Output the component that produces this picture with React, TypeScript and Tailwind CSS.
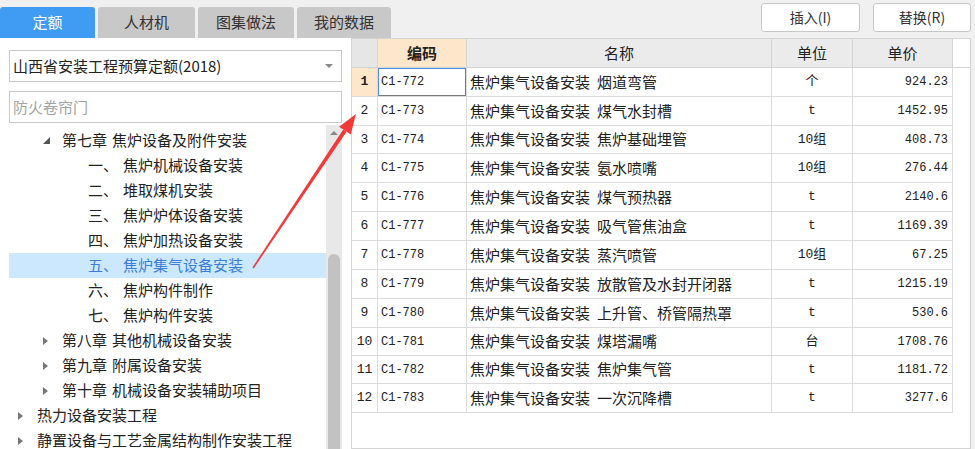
const TABS = [
  { label: '定额', active: true, w: 'w-[95px]' },
  { label: '人材机', active: false, w: 'w-[97px]' },
  { label: '图集做法', active: false, w: 'w-[96px]' },
  { label: '我的数据', active: false, w: 'w-[94px]' },
]

type TreeItem = { level: 0 | 1 | 2; text: string; open?: boolean; selected?: boolean }

const TREE: TreeItem[] = [
  { level: 1, text: '第七章 焦炉设备及附件安装', open: true },
  { level: 2, text: '一、 焦炉机械设备安装' },
  { level: 2, text: '二、 堆取煤机安装' },
  { level: 2, text: '三、 焦炉炉体设备安装' },
  { level: 2, text: '四、 焦炉加热设备安装' },
  { level: 2, text: '五、 焦炉集气设备安装', selected: true },
  { level: 2, text: '六、 焦炉构件制作' },
  { level: 2, text: '七、 焦炉构件安装' },
  { level: 1, text: '第八章 其他机械设备安装' },
  { level: 1, text: '第九章 附属设备安装' },
  { level: 1, text: '第十章 机械设备安装辅助项目' },
  { level: 0, text: '热力设备安装工程' },
  { level: 0, text: '静置设备与工艺金属结构制作安装工程' },
]

// no, code, name, unit, price, row height
const ROWS: [number, string, string, string, string, string][] = [
  [1, 'C1-772', '烟道弯管', '个', '924.23', 'h-[29px]'],
  [2, 'C1-773', '煤气水封槽', 't', '1452.95', 'h-[29px]'],
  [3, 'C1-774', '焦炉基础埋管', '10组', '408.73', 'h-[28px]'],
  [4, 'C1-775', '氨水喷嘴', '10组', '276.44', 'h-[29px]'],
  [5, 'C1-776', '煤气预热器', 't', '2140.6', 'h-[29px]'],
  [6, 'C1-777', '吸气管焦油盒', 't', '1169.39', 'h-[29px]'],
  [7, 'C1-778', '蒸汽喷管', '10组', '67.25', 'h-[29px]'],
  [8, 'C1-779', '放散管及水封开闭器', 't', '1215.19', 'h-[29px]'],
  [9, 'C1-780', '上升管、桥管隔热罩', 't', '530.6', 'h-[29px]'],
  [10, 'C1-781', '煤塔漏嘴', '台', '1708.76', 'h-[28px]'],
  [11, 'C1-782', '焦炉集气管', 't', '1181.72', 'h-[28px]'],
  [12, 'C1-783', '一次沉降槽', 't', '3277.6', 'h-[29px]'],
]

const cjk = "font-['Noto_Sans_CJK_SC',sans-serif]"
const mono = "font-['Liberation_Mono','Noto_Sans_CJK_SC',monospace]"

function TreeRow({ item }: { item: TreeItem }) {
  const pad = item.level === 0 ? 'pl-[9px]' : item.level === 1 ? 'pl-[34px]' : 'pl-[79px]'
  const [head, ...rest] = item.text.split(' ')
  return (
    <div
      className={`h-[25px] flex items-center ${pad} ${
        item.selected ? 'bg-[#cce8ff] text-[#3b7fd8]' : 'text-[#222]'
      }`}
    >
      {item.level < 2 && (
        <div className="w-[19px] shrink-0 flex items-center">
          {item.open ? (
            <svg width="7" height="7" viewBox="0 0 7 7">
              <polygon points="7,0 7,7 0,7" fill="#555" />
            </svg>
          ) : (
            <div className="w-0 h-0 border-l-[5px] border-l-[#777] border-y-[4px] border-y-transparent" />
          )}
        </div>
      )}
      <span>{head}</span>
      {rest.length > 0 && <span className="ml-[5px]">{rest.join(' ')}</span>}
    </div>
  )
}

export default function App() {
  return (
    <div className={`relative w-[975px] h-[449px] overflow-hidden bg-[#f0f0f0] flex flex-col ${cjk}`}>
      {/* Top bar: tabs + actions */}
      <div className="h-[38px] flex justify-between shrink-0">
        <div className="flex items-end gap-[3px]">
          {TABS.map((t) => (
            <div
              key={t.label}
              className={`${t.w} h-[31px] rounded-t-[3px] flex items-center justify-center text-[15px] ${
                t.active ? 'bg-[#3f9cf2] text-white' : 'bg-[#c8c8c8] text-[#333]'
              }`}
            >
              {t.label}
            </div>
          ))}
        </div>
        <div className="flex gap-[13px] pr-[4px] pt-[3px]">
          <button className="w-[99px] h-[29px] bg-white border border-[#c8c8c8] rounded-[3px] text-[14px] text-[#333]">
            插入(I)
          </button>
          <button className="w-[98px] h-[29px] bg-white border border-[#c8c8c8] rounded-[3px] text-[14px] text-[#333]">
            替换(R)
          </button>
        </div>
      </div>

      <div className="flex flex-1 min-h-0">
        {/* Left: quota tree */}
        <div className="w-[351px] bg-white flex flex-col px-[9px] shrink-0">
          <div className="mt-[12px] h-[32px] border border-[#c9c9c9] flex items-center justify-between pl-[3px] pr-[8px] text-[15px] text-[#222]">
            <span>山西省安装工程预算定额(2018)</span>
            <div className="w-0 h-0 border-t-[4px] border-t-[#888] border-x-[4px] border-x-transparent" />
          </div>
          <div className="mt-[9px] h-[32px] border border-[#c9c9c9] flex items-center pl-[3px] text-[15px] text-[#a3a3a3]">
            防火卷帘门
          </div>
          <div className="mt-[2px] flex flex-1 min-h-0">
            <div className="flex-1 pt-[3px] text-[15px]">
              {TREE.map((item) => (
                <TreeRow key={item.text} item={item} />
              ))}
            </div>
            <div className="w-[16px] bg-[#e8e8e8] flex flex-col">
              <div className="h-[16px] flex items-center justify-center">
                <div className="w-0 h-0 border-b-[4px] border-b-[#888] border-x-[4px] border-x-transparent" />
              </div>
              <div className="h-[113px]" />
              <div className="flex-1 mx-[2px] bg-[#c2c2c2] rounded-t-[6px]" />
            </div>
          </div>
        </div>

        {/* Right: quota list */}
        <div className="w-[620px] bg-white border border-[#d4d4d4] shrink-0">
          <div className="flex h-[29px] border-b border-[#d4d4d4] text-[15px] text-[#222]">
            <div className="w-[26px] bg-[#e6e6e6] border-r border-[#d4d4d4]" />
            <div className="w-[89px] bg-[#fde6c9] border-r border-[#d4d4d4] flex items-center justify-center font-bold">
              编码
            </div>
            <div className="w-[305px] bg-[#ebebeb] border-r border-[#d4d4d4] flex items-center justify-center">
              名称
            </div>
            <div className="w-[81px] bg-[#ebebeb] border-r border-[#d4d4d4] flex items-center justify-center">
              单位
            </div>
            <div className="w-[100px] bg-[#ebebeb] border-r border-[#d4d4d4] flex items-center justify-center">
              单价
            </div>
          </div>
          {ROWS.map(([no, code, name, unit, price, h]) => (
            <div key={code} className={`flex ${h} border-b border-[#dcdcdc] text-[#222] w-[601px]`}>
              <div
                className={`w-[26px] border-r border-[#dcdcdc] flex items-center justify-center text-[13px] ${mono} ${
                  no === 1 ? 'bg-[#fde6c9] font-bold' : ''
                }`}
              >
                {no}
              </div>
              <div
                className={`w-[89px] border-r border-[#dcdcdc] flex items-center pl-[3px] text-[12px] ${mono} ${
                  no === 1 ? 'shadow-[inset_1px_1px_0_#4a90e2,inset_-1px_-1px_0_#7a7a7a]' : ''
                }`}
              >
                {code}
              </div>
              <div className="w-[305px] border-r border-[#dcdcdc] flex items-center pl-[3px] text-[15px]">
                <span>焦炉集气设备安装</span>
                <span className="ml-[7px]">{name}</span>
              </div>
              <div className={`w-[81px] border-r border-[#dcdcdc] flex items-center justify-center text-[13px] ${mono}`}>
                {unit}
              </div>
              <div className={`w-[100px] border-r border-[#dcdcdc] flex items-center justify-end pr-[4px] text-[12px] ${mono}`}>
                {price}
              </div>
            </div>
          ))}
        </div>
      </div>

      {/* red annotation arrow */}
      <svg className="absolute inset-0 pointer-events-none" width="975" height="449" viewBox="0 0 975 449">
        <polygon points="253.7,268.4 252.3,267.6 343.2,129.5 346.6,131.7" fill="#f23a3a" />
        <polygon points="356,114 350.7,134.5 339.1,126.7" fill="#f23a3a" />
      </svg>
    </div>
  )
}
